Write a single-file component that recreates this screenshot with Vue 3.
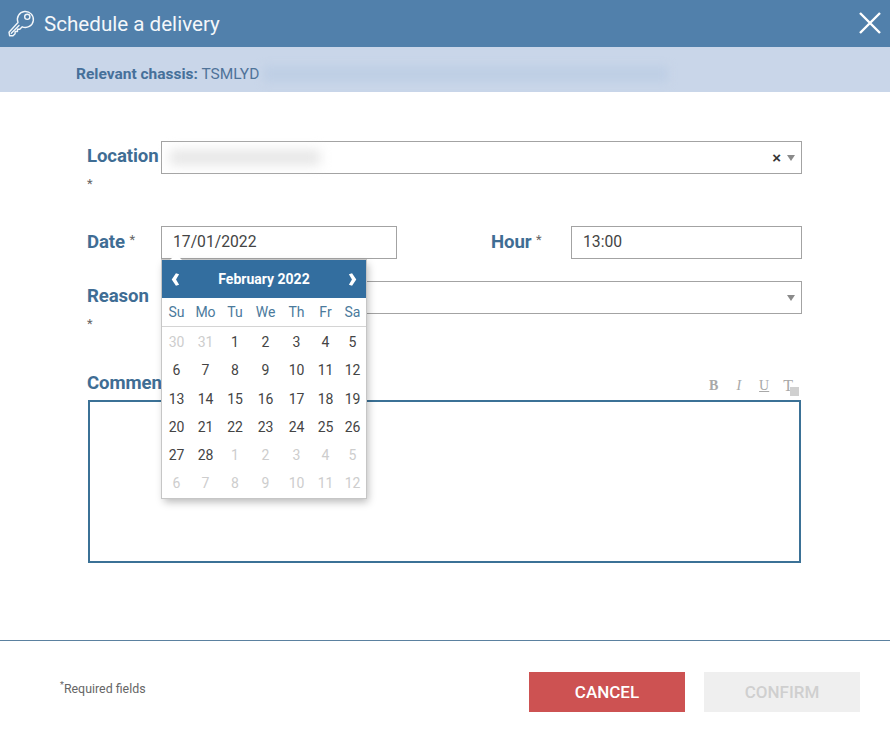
<script setup>
const weekdays = ['Su', 'Mo', 'Tu', 'We', 'Th', 'Fr', 'Sa']
const prev = [30, 31]
const next = [1, 2, 3, 4, 5, 6, 7, 8, 9, 10, 11, 12]
const days = [
  ...prev.map((n) => ({ n, off: true })),
  ...Array.from({ length: 28 }, (_, i) => ({ n: i + 1, off: false })),
  ...next.map((n) => ({ n, off: true })),
]
</script>

<template>
  <div class="dialog">
    <header class="title-bar">
      <svg class="key" viewBox="0 0 28 28" width="28" height="28" fill="none" stroke="#f2f6fa" stroke-width="1.4" stroke-linejoin="round" stroke-linecap="round">
        <path d="M11 13.500a8 8 0 1 1 4.200 4.300l-2.400 2.400h-2.300v2.300H8.100v2.200L6 26.700 2.600 26.700 2 23.200z" />
        <circle cx="20.300" cy="7.800" r="2.600" />
        <path d="M4.300 24.200 12 16.500" />
      </svg>
      <h1>Schedule a delivery</h1>
      <svg class="close" viewBox="0 0 22 22" width="22" height="22" stroke="#fff" stroke-width="2.400" fill="none">
        <path d="M1 1 21 21M21 1 1 21" />
      </svg>
    </header>

    <div class="chassis">
      <span class="chassis-text"><b>Relevant chassis:</b> TSMLYD</span>
      <span class="chassis-blur"></span>
    </div>

    <main class="form">
      <div class="row row-location">
        <label class="label">Location <span class="star star-below">*</span></label>
        <div class="control select">
          <span class="blur"></span>
          <span class="clear">×</span>
          <span class="caret"></span>
        </div>
      </div>

      <div class="row row-date">
        <label class="label">Date <span class="star">*</span></label>
        <div class="date-wrap">
          <div class="control value">17/01/2022</div>
          <div class="calendar">
            <div class="cal-head">
              <svg viewBox="0 0 10 14" width="9" height="13" fill="#fff"><path d="M5.500 0 9 1.200 5.600 7 9 12.800 5.500 14 .8 7z" /></svg>
              <span>February 2022</span>
              <svg viewBox="0 0 10 14" width="9" height="13" fill="#fff"><path d="M4.500 0 1 1.200 4.400 7 1 12.800 4.500 14 9.200 7z" /></svg>
            </div>
            <div class="cal-grid cal-week">
              <span v-for="d in weekdays" :key="d">{{ d }}</span>
            </div>
            <div class="cal-grid cal-days">
              <span v-for="(d, i) in days" :key="i" :class="{ off: d.off }">{{ d.n }}</span>
            </div>
          </div>
        </div>
        <label class="label label-hour">Hour <span class="star">*</span></label>
        <div class="control value hour">13:00</div>
      </div>

      <div class="row row-reason">
        <label class="label">Reason <span class="star star-below">*</span></label>
        <div class="control select">
          <span class="caret"></span>
        </div>
      </div>

      <div class="comment-head">
        <label class="label">Comment</label>
        <div class="toolbar">
          <span class="b">B</span>
          <span class="i">I</span>
          <span class="u">U</span>
          <span class="t">T<i></i></span>
        </div>
      </div>
      <div class="comment-box"></div>
    </main>

    <footer class="footer">
      <span class="required"><sup>*</sup>Required fields</span>
      <div class="actions">
        <button class="btn cancel">CANCEL</button>
        <button class="btn confirm">CONFIRM</button>
      </div>
    </footer>
  </div>
</template>

<style>
html, body { margin: 0; background: #fff; }
</style>

<style scoped>
.dialog {
  width: 890px;
  height: 734px;
  display: flex;
  flex-direction: column;
  font-family: Roboto, "Liberation Sans", sans-serif;
  background: #fff;
  overflow: hidden;
}
.title-bar {
  height: 47px;
  flex: none;
  box-sizing: border-box;
  background: #5180ab;
  display: flex;
  align-items: center;
  padding: 0 9px 0 7px;
}
.key { flex: none; margin-top: -1px; }
.title-bar h1 {
  margin: 0 0 0 9px;
  font-size: 20.600px;
  font-weight: 400;
  color: #f4f7fa;
  flex: 1;
}
.close { flex: none; margin-top: -1px; }
.chassis {
  height: 45px;
  flex: none;
  background: #c9d6e9;
  display: flex;
  align-items: center;
  padding-left: 76px;
  font-size: 15.500px;
  color: #4f7399;
}
.chassis-text { white-space: nowrap; margin-top: 8px; width: 184px; flex: none; }
.chassis-text b { font-weight: 700; color: #46709a; }
.chassis-blur {
  width: 404px;
  height: 16px;
  margin-top: 9px;
  margin-left: 4px;
  background: #bfcfe5;
  filter: blur(4px);
}
.form {
  flex: 1;
  box-sizing: border-box;
  padding: 49px 88px 0 87px;
}
.row { display: flex; height: 32px; align-items: flex-start; }
.row-date { margin-top: 53px; }
.row-reason { margin-top: 23px; }
.label {
  width: 74px;
  flex: none;
  font-size: 18.600px;
  font-weight: 700;
  letter-spacing: -.1px;
  line-height: 31px;
  color: #3f6d94;
}
.row-date .label { line-height: 27px; }
.star { font-size: 13px; font-weight: 400; color: #666; vertical-align: 4px; margin-left: 0; }
.star-below { display: block; margin: 3px 0 0; line-height: 18px; }
.control {
  box-sizing: border-box;
  height: 33px;
  background: #fff;
  border: 1px solid #a3a3a3;
  color: #444;
  font-size: 15.700px;
}
.select {
  flex: 1;
  display: flex;
  align-items: center;
  justify-content: flex-end;
  padding-right: 6px;
}
.blur {
  margin-right: auto;
  margin-left: 8px;
  width: 150px;
  height: 15px;
  background: #e6e6e6;
  filter: blur(6px);
}
.clear { font-size: 15px; font-weight: 700; color: #333; margin-right: 6px; font-family: "Liberation Sans", sans-serif; }
.caret {
  width: 0;
  height: 0;
  border-left: 4.500px solid transparent;
  border-right: 4.500px solid transparent;
  border-top: 6px solid #8a8a8a;
}
.value { padding-left: 11px; line-height: 30px; }
.date-wrap { width: 236px; flex: none; position: relative; }
.label-hour { width: 80px; margin-left: 94px; }
.hour { flex: 1; padding-left: 11px; }
.calendar {
  position: absolute;
  left: 1px;
  top: 34px;
  width: 204px;
  height: 238px;
  background: #fff;
  box-shadow: 0 0 0 1px #c6c6c6, 2px 4px 8px rgba(0, 0, 0, .28);
  z-index: 2;
}
.calendar::before {
  content: "";
  position: absolute;
  left: 8px;
  top: -6px;
  width: 0;
  height: 0;
  border-left: 6px solid transparent;
  border-right: 6px solid transparent;
  border-bottom: 6px solid #fff;
}
.cal-head {
  height: 38px;
  background: #336e9f;
  color: #fff;
  font-size: 14px;
  font-weight: 700;
  display: flex;
  align-items: center;
  justify-content: space-between;
  padding: 0 9px;
}
.cal-grid {
  display: grid;
  grid-template-columns: 29px 29px 30px 31px 31px 27px 27px;
  text-align: center;
  font-size: 14px;
}
.cal-week {
  height: 29px;
  line-height: 28px;
  color: #4b7a9c;
  border-bottom: 1px solid #d4d4d4;
  box-sizing: border-box;
}
.cal-days {
  grid-auto-rows: 28.300px;
  line-height: 28px;
  color: #444;
  padding-top: 1px;
}
.cal-days .off { color: #cdcdcd; }
.comment-head {
  margin-top: 58px;
  height: 29px;
  display: flex;
  justify-content: space-between;
  align-items: flex-start;
}
.comment-head .label { width: auto; margin-top: -3px; }
.toolbar {
  display: flex;
  gap: 17px;
  margin-top: 7px;
  font-family: "Liberation Serif", serif;
  font-size: 14px;
  color: #a8a8a8;
  padding-right: 9px;
}
.toolbar .b { font-weight: 700; margin-right: 1px; }
.toolbar .i { font-style: italic; margin-right: 1px; }
.toolbar .u { text-decoration: underline; margin-right: -3px; }
.toolbar .t { position: relative; font-size: 16px; line-height: 15px; }
.toolbar .t i {
  position: absolute;
  right: -6px;
  bottom: -2px;
  width: 9px;
  height: 9px;
  background: #d0d0d0;
}
.comment-box {
  height: 163px;
  box-sizing: border-box;
  margin-right: 1px;
  margin-left: 1px;
  border: 2px solid #3b7196;
}
.footer {
  height: 94px;
  flex: none;
  box-sizing: border-box;
  border-top: 1px solid #5b81a0;
  display: flex;
  align-items: flex-start;
  justify-content: space-between;
  padding: 31px 30px 0 60px;
}
.required { font-size: 12.400px; color: #666; margin-top: 9px; }
.required sup { font-size: 9px; line-height: 0; }
.actions { display: flex; gap: 19px; }
.btn {
  width: 156px;
  height: 40px;
  border: 0;
  font-family: inherit;
  font-size: 17px;
  font-weight: 500;
  padding: 0;
}
.cancel { background: #cd5252; color: #fff; }
.confirm { background: #efefef; color: #cfcfcf; }
</style>
